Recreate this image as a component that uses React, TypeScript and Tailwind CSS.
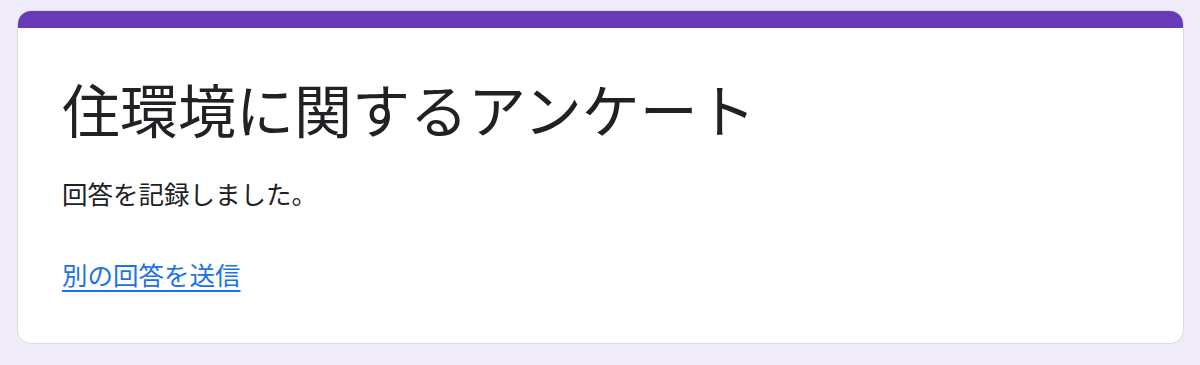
import React from "react";

export default function App() {
  return (
    <div
      className="w-[1200px] h-[365px] bg-[#f0ebf8] pt-[10px] px-[17px]"
      style={{ fontFamily: '"Noto Sans CJK JP", "Noto Sans", sans-serif' }}
    >
      <div className="w-[1167px] h-[334px] bg-white rounded-[14px] border border-[#dadce0] overflow-hidden flex flex-col">
        <div className="h-[18px] bg-[#673ab7] -mx-px -mt-px shrink-0" />
        <div className="pl-[44px] pr-[44px] pt-[45px]">
          <h1 className="text-[58px] leading-[70px] text-[#202124] font-normal tracking-normal">
            住環境に関するアンケート
          </h1>
          <p className="mt-[32px] text-[25.5px] leading-[36px] text-[#202124]">
            回答を記録しました。
          </p>
          <a
            href="#"
            className="inline-block mt-[45px] text-[25.5px] leading-[36px] text-[#1a73e8] underline underline-offset-[5px] decoration-[1.5px]"
          >
            別の回答を送信
          </a>
        </div>
      </div>
    </div>
  );
}
